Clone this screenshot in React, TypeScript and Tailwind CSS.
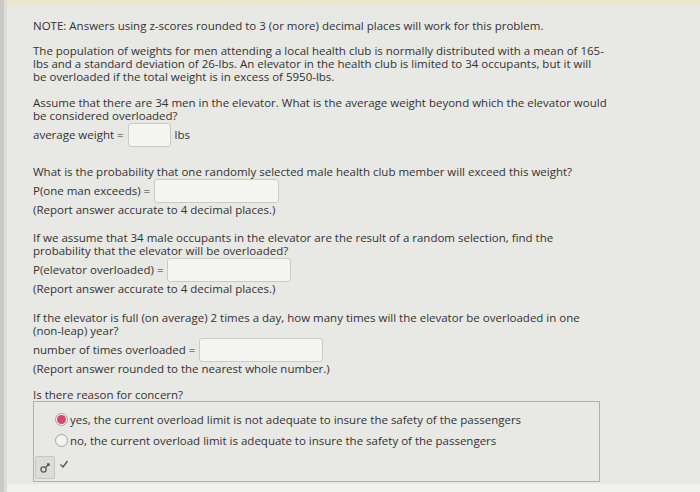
import React from 'react';

function Blank({ w }: { w: number }) {
  return (
    <span
      className="inline-block h-[24px] align-middle rounded-[3px] border border-[#c9cbc6] bg-[#f4f4f1] mx-[4px]"
      style={{ width: w }}
    />
  );
}

function Radio({ checked }: { checked?: boolean }) {
  return (
    <span className="inline-flex w-[13px] h-[13px] rounded-full border border-[#a3a5a1] bg-[#f3f3f1] items-center justify-center shrink-0">
      {checked && <span className="w-[9px] h-[9px] rounded-full bg-[#d8456e]" />}
    </span>
  );
}

export default function App() {
  return (
    <div
      className="w-[700px] h-[492px] bg-[#e8e8e4] text-[#333333] text-[11.5px] leading-[13px] flex overflow-hidden"
      style={{ fontFamily: '"Open Sans", "DejaVu Sans", sans-serif' }}
    >
      <div className="w-[4px] bg-[#c9c9c6]" />
      <div className="w-[3px] bg-[#dcdcd8]" />
      <div className="flex-1 flex flex-col">
        <div className="h-[6px] bg-[#ebe7cc]" />
        <div className="flex-1 pl-[26px] pt-[13px] whitespace-nowrap">
          <p>NOTE: Answers using z-scores rounded to 3 (or more) decimal places will work for this problem.</p>

          <p className="mt-[12px]">
            The population of weights for men attending a local health club is normally distributed with a mean of 165-
            <br />
            lbs and a standard deviation of 26-lbs. An elevator in the health club is limited to 34 occupants, but it will
            <br />
            be overloaded if the total weight is in excess of 5950-lbs.
          </p>

          <p className="mt-[13px]">
            Assume that there are 34 men in the elevator. What is the average weight beyond which the elevator would
            <br />
            be considered overloaded?
          </p>
          <div className="h-[25px] flex items-center">
            average weight =<Blank w={43} />lbs
          </div>

          <p className="mt-[18px]">What is the probability that one randomly selected male health club member will exceed this weight?</p>
          <div className="h-[25px] flex items-center">
            P(one man exceeds) =<Blank w={125} />
          </div>
          <p>(Report answer accurate to 4 decimal places.)</p>

          <p className="mt-[15px]">
            If we assume that 34 male occupants in the elevator are the result of a random selection, find the
            <br />
            probability that the elevator will be overloaded?
          </p>
          <div className="h-[25px] flex items-center">
            P(elevator overloaded) =<Blank w={124} />
          </div>
          <p>(Report answer accurate to 4 decimal places.)</p>

          <p className="mt-[16px]">
            If the elevator is full (on average) 2 times a day, how many times will the elevator be overloaded in one
            <br />
            (non-leap) year?
          </p>
          <div className="h-[25px] flex items-center">
            number of times overloaded =<Blank w={124} />
          </div>
          <p>(Report answer rounded to the nearest whole number.)</p>

          <p className="mt-[13px]">Is there reason for concern?</p>
          <div className="w-[567px] h-[81px] border border-[#aab4a6] flex flex-col pl-[21px] pt-[7px]">
            <label className="flex items-center gap-[2px] h-[21px]">
              <Radio checked />
              <span>yes, the current overload limit is not adequate to insure the safety of the passengers</span>
            </label>
            <label className="flex items-center gap-[2px] h-[21px]">
              <Radio />
              <span>no, the current overload limit is adequate to insure the safety of the passengers</span>
            </label>
            <div className="flex items-start gap-[4px] -ml-[20px] mt-[5px]">
              <span className="w-[20px] h-[23px] rounded-[2px] border border-[#c5c7c2] bg-[#dcdcd8] flex items-center justify-center">
                <svg width="12" height="12" viewBox="0 0 12 12" fill="none" stroke="#555" strokeWidth="1.3">
                  <circle cx="4.5" cy="7.5" r="2.6" />
                  <path d="M6.5 5.5 L10 2 M8 2 H10 V4" />
                </svg>
              </span>
              <svg width="10" height="10" viewBox="0 0 10 10" fill="none" stroke="#555" strokeWidth="1.4" className="mt-[3px]">
                <path d="M1.5 5.5 L4 8 L8.5 2" />
              </svg>
            </div>
          </div>
        </div>
        <div className="h-[8px] bg-[#f1f1ee]" />
      </div>
    </div>
  );
}
